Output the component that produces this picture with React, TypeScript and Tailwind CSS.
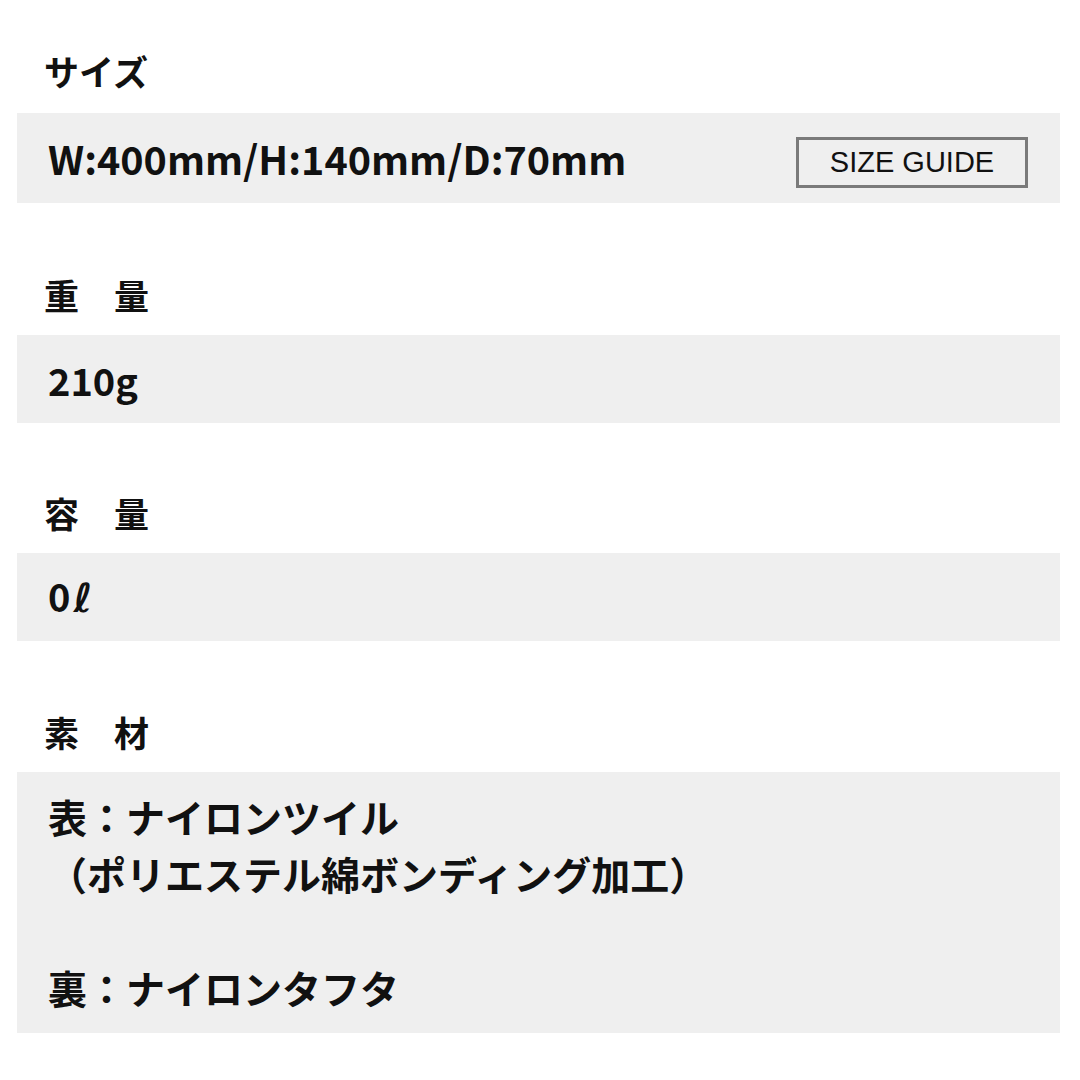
const jp = "font-['Noto_Sans_CJK_JP','Noto_Sans',sans-serif]";

function Label({ children }: { children: string }) {
  return (
    <h3 className={`${jp} pl-[27px] text-[35px] font-bold leading-[56px] text-[#111]`}>
      {children}
    </h3>
  );
}

export default function App() {
  return (
    <div className="w-[1080px] h-[1080px] bg-white pl-[17px] pr-[20px] pt-[43px] text-[#111]">
      {/* サイズ */}
      <Label>サイズ</Label>
      <div className="mt-[14px] h-[90px] bg-[#efefef] flex items-center justify-between pl-[31px] pr-[32px]">
        <p className={`${jp} text-[39.5px] font-bold`}>W:400mm/H:140mm/D:70mm</p>
        <button className="mt-[8px] w-[232px] h-[51px] border-[3px] border-[#7a7a7a] font-['Liberation_Sans',Arial,sans-serif] text-[29px] text-[#111] leading-none">
          SIZE GUIDE
        </button>
      </div>

      {/* 重量 */}
      <div className="mt-[64px]">
        <Label>重　量</Label>
      </div>
      <div className="mt-[12px] h-[88px] bg-[#efefef] flex items-center pl-[31px]">
        <p className={`${jp} text-[38px] font-bold`}>210g</p>
      </div>

      {/* 容量 */}
      <div className="mt-[62px]">
        <Label>容　量</Label>
      </div>
      <div className="mt-[12px] h-[88px] bg-[#efefef] flex items-center pl-[31px]">
        <p className={`${jp} text-[38px] font-bold leading-none`}>
          0<span className="ml-[3px] font-['DejaVu_Sans',sans-serif] text-[40px] font-bold">ℓ</span>
        </p>
      </div>

      {/* 素材 */}
      <div className="mt-[63px]">
        <Label>素　材</Label>
      </div>
      <div className="mt-[12px] h-[261px] bg-[#efefef] pl-[31px] pt-[16px]">
        <p className={`${jp} text-[39px] font-bold leading-[57px]`}>
          表：ナイロンツイル
          <br />
          （ポリエステル綿ボンディング加工）
          <br />
          <br />
          裏：ナイロンタフタ
        </p>
      </div>
    </div>
  );
}
